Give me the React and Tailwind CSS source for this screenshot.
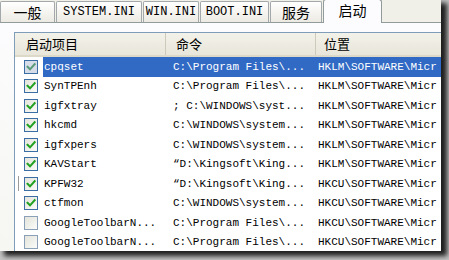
const rows = [
  { name: 'cpqset', cmd: 'C:\\Program Files\\...', loc: 'HKLM\\SOFTWARE\\Micr', checked: true, selected: true },
  { name: 'SynTPEnh', cmd: 'C:\\Program Files\\...', loc: 'HKLM\\SOFTWARE\\Micr', checked: true },
  { name: 'igfxtray', cmd: '; C:\\WINDOWS\\syst...', loc: 'HKLM\\SOFTWARE\\Micr', checked: true },
  { name: 'hkcmd', cmd: 'C:\\WINDOWS\\system...', loc: 'HKLM\\SOFTWARE\\Micr', checked: true },
  { name: 'igfxpers', cmd: 'C:\\WINDOWS\\system...', loc: 'HKLM\\SOFTWARE\\Micr', checked: true },
  { name: 'KAVStart', cmd: '\u201cD:\\Kingsoft\\King...', loc: 'HKLM\\SOFTWARE\\Micr', checked: true },
  { name: 'KPFW32', cmd: '\u201cD:\\Kingsoft\\King...', loc: 'HKCU\\SOFTWARE\\Micr', checked: true, mark: true },
  { name: 'ctfmon', cmd: 'C:\\WINDOWS\\system...', loc: 'HKCU\\SOFTWARE\\Micr', checked: true },
  { name: 'GoogleToolbarN...', cmd: 'C:\\Program Files\\...', loc: 'HKCU\\SOFTWARE\\Micr', checked: false },
  { name: 'GoogleToolbarN...', cmd: 'C:\\Program Files\\...', loc: 'HKCU\\SOFTWARE\\Micr', checked: false },
];

const cjk = { fontFamily: '"Noto Sans CJK SC", "Noto Sans", sans-serif' };
const mono = { fontFamily: '"Liberation Mono", "DejaVu Sans Mono", monospace' };

function Tab({ w, children, selected, isCjk }) {
  if (selected) {
    return (
      <div
        className={`${w} h-[24px] -mb-px flex items-center justify-center border border-b-0 border-[#919b9c] rounded-t-[3px] bg-[#fcfcfe] text-[14px] text-black pb-[3px] relative z-10`}
        style={cjk}
      >
        {children}
      </div>
    );
  }
  return (
    <div
      className={`${w} h-[21px] flex items-center justify-center border border-b-0 border-[#a3a9ab] rounded-t-[2px] bg-gradient-to-b from-[#ffffff] to-[#eceae2] text-black ${isCjk ? 'text-[14px]' : 'text-[12px]'}`}
      style={isCjk ? cjk : mono}
    >
      {children}
    </div>
  );
}

function Check({ checked, dim }) {
  return (
    <div
      className={`w-[14px] h-[14px] border ${checked ? 'border-[#3a6ea5]' : 'border-[#8aa0b8]'} ${dim ? 'bg-[#d6dde8]' : 'bg-gradient-to-br from-[#e4e4dc] to-[#fbfbf9]'} flex items-center justify-center`}
    >
      {checked && (
        <svg width="10" height="10" viewBox="0 0 10 10">
          <path d="M1.5 4.8 L4 7.3 L8.6 2.2" fill="none" stroke={dim ? '#5a9a7a' : '#21a121'} strokeWidth="2" strokeLinecap="square" />
        </svg>
      )}
    </div>
  );
}

export default function App() {
  return (
    <div className="w-[449px] h-[260px] bg-[#c4c4c4] overflow-hidden">
      <div className="w-[441px] h-[251px] bg-[#fbfbf8] flex flex-col overflow-hidden shadow-[5px_4px_5px_1px_rgba(0,0,0,0.85)] relative">
        <div className="h-[23px] shrink-0 flex items-end gap-px bg-[#f1f0e8] border-b border-[#919b9c]">
          <Tab w="w-[55px]" isCjk>一般</Tab>
          <Tab w="w-[86px]">SYSTEM.INI</Tab>
          <Tab w="w-[56px]">WIN.INI</Tab>
          <Tab w="w-[69px]">BOOT.INI</Tab>
          <Tab w="w-[52px]" isCjk>服务</Tab>
          <Tab w="w-[59px]" selected>启动</Tab>
        </div>
        <div className="flex-1 pl-[14px] pt-[9px] bg-gradient-to-b from-[#fcfcfe] to-[#f6f6f2]">
          <div className="h-full border-l border-t border-[#7f9db9] bg-white">
            <div className="h-[24px] flex bg-gradient-to-b from-[#f3f2ea] to-[#e8e6da] border-b-2 border-[#dcd9c9] text-[13px] text-black" style={cjk}>
              <div className="w-[151px] pl-[11px] flex items-center border-r border-[#cdcabb]">启动项目</div>
              <div className="w-[150px] pl-[10px] flex items-center border-r border-[#cdcabb]">命令</div>
              <div className="flex-1 pl-[8px] flex items-center">位置</div>
            </div>
            <div className="flex flex-col text-[11px]" style={mono}>
              {rows.map((r, i) => (
                <div key={i} className="h-[19.5px] flex items-center relative">
                  {r.mark && <div className="absolute left-[3px] top-[2px] w-px h-[15px] bg-[#9a9a9a]" />}
                  <div className="w-[28px] pl-[9px] flex items-center">
                    <Check checked={r.checked} dim={r.selected} />
                  </div>
                  <div className={`flex-1 h-full flex items-center ${r.selected ? 'bg-[#316ac5] text-white' : 'text-black'}`}>
                    <div className="w-[122px] pl-px whitespace-nowrap overflow-hidden">{r.name}</div>
                    <div className="w-[150px] pl-[8px] whitespace-nowrap overflow-hidden">{r.cmd}</div>
                    <div className="flex-1 pl-[3px] whitespace-nowrap overflow-hidden">{r.loc}</div>
                  </div>
                </div>
              ))}
            </div>
          </div>
        </div>
      </div>
    </div>
  );
}
